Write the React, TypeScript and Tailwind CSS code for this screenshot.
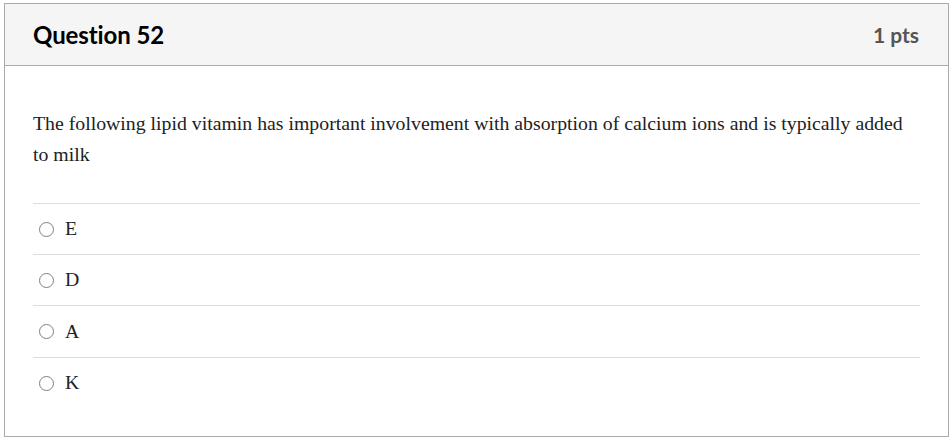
const ANSWERS = ["E", "D", "A", "K"];

export default function App() {
  return (
    <div className="min-h-[441px] bg-white pl-[4px] pt-[3px]">
      <div className="w-[945px] border border-[#aaaaaa] bg-white">
        <div className="flex h-[62px] items-center justify-between border-b border-[#aaaaaa] bg-[#f5f5f5] px-[28px] font-['Lato',sans-serif]">
          <h2 className="text-[24px] font-bold tracking-[-0.1px] text-black">Question 52</h2>
          <span className="pr-[1px] text-[21px] font-bold text-[#555555]">1 pts</span>
        </div>
        <div className="px-[28px] pb-[28px] pt-[42px] font-['Liberation_Serif',serif] text-[19.8px] text-[#222222]">
          <p className="mb-[33px] leading-[31px]">
            The following lipid vitamin has important involvement with absorption of calcium ions and is typically added
            to milk
          </p>
          {ANSWERS.map((a, i) => (
            <label
              key={a}
              className={`flex items-center border-t border-[#dddddd] pl-[6px] ${i === 2 ? "h-[52px]" : "h-[51px]"}`}
            >
              <span className="block size-[15px] rounded-full border border-[#808080] bg-white" />
              <span className="ml-[11px] leading-none">{a}</span>
            </label>
          ))}
        </div>
      </div>
    </div>
  );
}
